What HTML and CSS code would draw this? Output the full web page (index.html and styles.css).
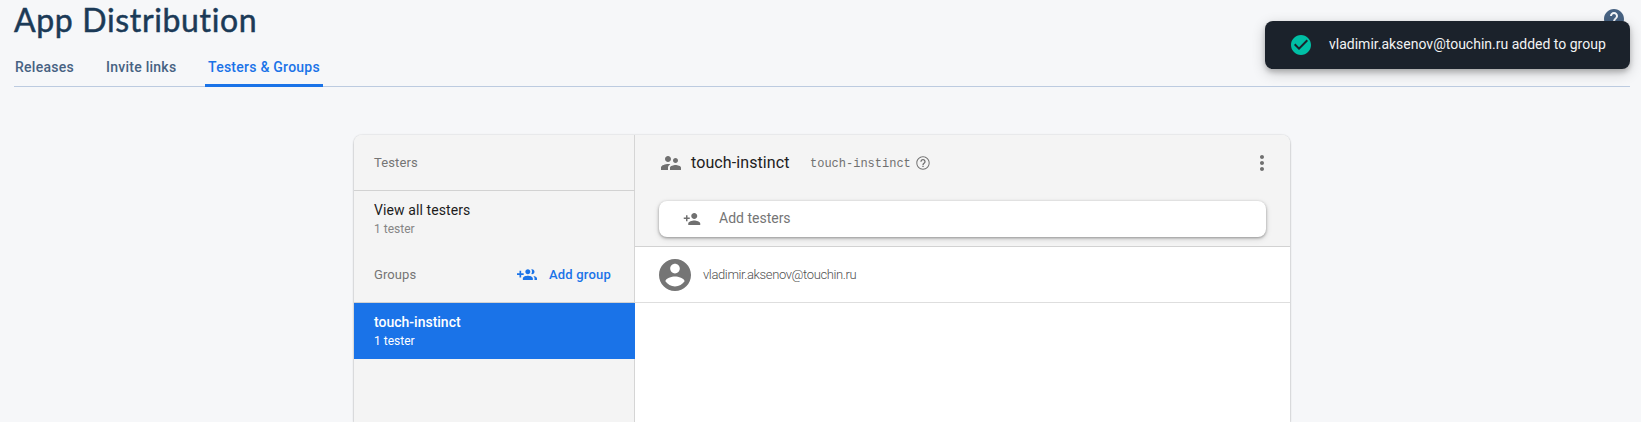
FILE: index.html
```html
<!DOCTYPE html>
<html lang="en">
<head>
<meta charset="utf-8">
<title>App Distribution</title>
<link rel="stylesheet" href="styles.css">
</head>
<body>
<header class="page-header">
  <div class="title-row">
    <h1 class="title">App Distribution</h1>
    <svg class="help" viewBox="0 0 24 24"><path d="M12 2C6.48 2 2 6.48 2 12s4.48 10 10 10 10-4.48 10-10S17.52 2 12 2zm1 17h-2v-2h2v2zm2.07-7.75l-.9.92C13.45 12.9 13 13.5 13 15h-2v-.5c0-1.1.45-2.1 1.17-2.83l1.24-1.26c.37-.36.59-.86.59-1.41 0-1.1-.9-2-2-2s-2 .9-2 2H8c0-2.21 1.79-4 4-4s4 1.79 4 4c0 .88-.36 1.68-.93 2.25z"/></svg>
  </div>
  <nav class="tabs">
    <a class="tab tab-releases">Releases</a>
    <a class="tab tab-invite">Invite links</a>
    <a class="tab tab-active">Testers &amp; Groups</a>
  </nav>
</header>

<main class="card">
  <aside class="sidebar">
    <div class="side-head"><span class="side-label">Testers</span></div>
    <div class="item">
      <div class="item-name">View all testers</div>
      <div class="item-count">1 tester</div>
    </div>
    <div class="side-groups">
      <span class="side-label">Groups</span>
      <a class="add-group">
        <svg class="icon20" viewBox="0 0 24 24"><path d="M8 10H5V7H3v3H0v2h3v3h2v-3h3v-2zm10 1c1.66 0 2.99-1.34 2.99-3S19.66 5 18 5c-.32 0-.63.05-.91.14.57.81.9 1.79.9 2.86s-.34 2.04-.9 2.86c.28.09.59.14.91.14zm-5 0c1.66 0 2.99-1.34 2.99-3S14.66 5 13 5c-1.66 0-3 1.34-3 3s1.34 3 3 3zm6.62 2.16c.83.73 1.38 1.66 1.38 2.84v2h3v-2c0-1.54-2.37-2.49-4.38-2.84zM13 13c-2 0-6 1-6 3v2h12v-2c0-2-4-3-6-3z"/></svg>
        <span>Add group</span>
      </a>
    </div>
    <div class="item item-selected">
      <div class="item-name">touch-instinct</div>
      <div class="item-count">1 tester</div>
    </div>
  </aside>
  <section class="content">
    <div class="content-head">
      <div class="group-row">
        <svg class="icon24" viewBox="0 0 24 24"><path d="M16.5 12c1.38 0 2.49-1.12 2.49-2.5S17.88 7 16.5 7C15.12 7 14 8.12 14 9.5s1.12 2.5 2.5 2.5zM9 11c1.66 0 2.99-1.34 2.99-3S10.66 5 9 5C7.34 5 6 6.34 6 8s1.34 3 3 3zm7.5 3c-1.83 0-5.5.92-5.5 2.75V19h11v-2.25c0-1.83-3.67-2.75-5.5-2.75zM9 13c-2.33 0-7 1.17-7 3.5V19h7v-2.25c0-.85.33-2.34 2.37-3.47C10.5 13.1 9.66 13 9 13z"/></svg>
        <span class="group-name">touch-instinct</span>
        <span class="group-alias">touch-instinct</span>
        <svg class="icon16" viewBox="0 0 24 24"><path d="M11 18h2v-2h-2v2zm1-16C6.48 2 2 6.48 2 12s4.48 10 10 10 10-4.48 10-10S17.52 2 12 2zm0 18.500c-4.690 0-8.500-3.810-8.500-8.500s3.810-8.500 8.500-8.500 8.500 3.810 8.500 8.500-3.810 8.500-8.500 8.500zm0-14.500c-2.210 0-4 1.790-4 4h2c0-1.100.9-2 2-2s2 .9 2 2c0 2-3 1.750-3 5h2c0-2.250 3-2.500 3-5 0-2.210-1.790-4-4-4z"/></svg>
        <svg class="icon24 more" viewBox="0 0 24 24"><path d="M12 8c1.100 0 2-.9 2-2s-.9-2-2-2-2 .9-2 2 .9 2 2 2zm0 2c-1.100 0-2 .9-2 2s.9 2 2 2 2-.9 2-2-.9-2-2-2zm0 6c-1.100 0-2 .9-2 2s.9 2 2 2 2-.9 2-2-.9-2-2-2z"/></svg>
      </div>
      <div class="add-box">
        <svg class="icon18" viewBox="0 0 24 24"><path d="M15 12c2.210 0 4-1.790 4-4s-1.790-4-4-4-4 1.790-4 4 1.790 4 4 4zm-9-2V7H4v3H1v2h3v3h2v-3h3v-2H6zm9 4c-2.670 0-8 1.340-8 4v2h16v-2c0-2.660-5.330-4-8-4z"/></svg>
        <span class="add-text">Add testers</span>
      </div>
    </div>
    <div class="tester-row">
      <svg class="avatar" viewBox="2 2 20 20"><path d="M12 2C6.480 2 2 6.480 2 12s4.480 10 10 10 10-4.480 10-10S17.520 2 12 2zm0 3c1.660 0 3 1.340 3 3s-1.340 3-3 3-3-1.340-3-3 1.340-3 3-3zm0 14.200c-2.500 0-4.710-1.280-6-3.220.030-1.990 4-3.080 6-3.080 1.990 0 5.970 1.090 6 3.080-1.290 1.940-3.500 3.220-6 3.220z"/></svg>
      <span class="email">vladimir.aksenov@touchin.ru</span>
    </div>
  </section>
</main>

<div class="toast">
  <svg class="toast-icon" viewBox="0 0 24 24"><path d="M12 2C6.480 2 2 6.480 2 12s4.480 10 10 10 10-4.480 10-10S17.520 2 12 2zm-2 15l-5-5 1.410-1.410L10 14.170l7.590-7.590L19 8l-9 9z"/></svg>
  <span class="toast-text">vladimir.aksenov@touchin.ru added to group</span>
</div>
</body>
</html>
```
FILE: styles.css
```css
* { box-sizing: border-box; }
html, body { height: 100%; }
body {
  display: flex;
  flex-direction: column;
  margin: 0;
  background: #f6f7f9;
  font-family: Roboto, sans-serif;
  color: rgba(0, 0, 0, 0.87);
}
svg { display: block; flex: none; fill: currentColor; }

.page-header { flex: none; height: 87px; padding: 0 11px 0 14px; }
.title-row { display: flex; justify-content: space-between; height: 47px; padding-right: 4px; }
.title {
  margin: 0;
  font: 400 32px/40px Lato, sans-serif;
  letter-spacing: 0.65px;
  color: #1b3a57;
  -webkit-text-stroke: 0.5px #1b3a57;
  white-space: nowrap;
}
.help { width: 24px; height: 24px; margin-top: 7px; color: #476282; }
.tabs { display: flex; height: 40px; border-bottom: 1px solid #bccbe0; }
.tab {
  height: 40px;
  line-height: 40px;
  font-size: 14px;
  font-weight: 500;
  letter-spacing: 0.25px;
  color: #476282;
  white-space: nowrap;
}
.tab-releases { width: 92px; padding-left: 1px; }
.tab-invite { width: 99px; }
.tab-active {
  width: 118px;
  padding-left: 3px;
  color: #1a73e8;
  background: linear-gradient(#1a73e8, #1a73e8) bottom / 100% 3px no-repeat;
}

.card {
  display: flex;
  flex: 1;
  width: 936px;
  margin: 48px 0 0 354px;
  background: #fff;
  border-radius: 8px 8px 0 0;
  overflow: hidden;
  box-shadow: 0 1px 2px rgba(0, 0, 0, 0.3), 0 0 2px rgba(0, 0, 0, 0.15);
}
.sidebar { width: 281px; background: linear-gradient(#d5d5d5, #d5d5d5) right / 1px 100% no-repeat #f4f4f4; }
.side-head { display: flex; align-items: center; height: 56px; padding-left: 20px; border-bottom: 1px solid #d2d2d2; }
.side-label { font-size: 13px; letter-spacing: 0.1px; color: #757575; }
.item { height: 56px; padding: 9px 20px 0; }
.item-name { font-size: 14px; line-height: 20px; letter-spacing: 0.1px; color: #1c1c1c; }
.item-count { font-size: 12px; line-height: 18px; color: #858585; }
.side-groups {
  display: flex;
  align-items: center;
  justify-content: space-between;
  height: 56px;
  padding: 0 24px 0 20px;
  border-bottom: 1px solid #d2d2d2;
}
.add-group { display: flex; align-items: center; gap: 12px; font-size: 13px; font-weight: 500; letter-spacing: 0.2px; color: #1a73e8; }
.item-selected { background: #1a73e8; }
.item-selected .item-name { font-weight: 500; letter-spacing: 0; color: #fff; }
.item-selected .item-count { color: #fff; }

.icon16 { width: 16px; height: 16px; }
.icon18 { width: 18px; height: 18px; }
.icon20 { width: 20px; height: 20px; }
.icon24 { width: 24px; height: 24px; }

.content { flex: 1; }
.content-head { height: 112px; background: #f4f4f4; border-bottom: 1px solid #d2d2d2; }
.group-row { display: flex; align-items: center; height: 56px; padding: 0 16px 0 24px; color: #707070; }
.group-name { width: 119px; margin: -2px 0 0 8px; font-size: 16px; letter-spacing: 0.1px; color: #212121; }
.group-alias { width: 105px; padding-top: 1px; font: 12px/16px "Liberation Mono", monospace; }
.more { margin-left: auto; }
.add-box {
  display: flex;
  align-items: center;
  height: 36px;
  margin: 10px 24px 0;
  padding-left: 24px;
  background: #fff;
  border-radius: 8px;
  box-shadow: 0 1px 3px rgba(0, 0, 0, 0.35), 0 2px 6px rgba(0, 0, 0, 0.12);
  color: #707070;
}
.add-text { margin: -2px 0 0 18px; font-size: 14px; color: #757575; }
.tester-row { display: flex; align-items: center; height: 56px; padding-left: 24px; border-bottom: 1px solid #dedede; }
.avatar { width: 32px; height: 32px; color: #757575; }
.email { margin-left: 12px; font-size: 13px; font-weight: 300; letter-spacing: -0.38px; color: #505050; }

.toast {
  position: absolute;
  top: 21px;
  right: 11px;
  display: flex;
  align-items: center;
  width: 365px;
  height: 48px;
  padding: 0 24px;
  background: #1b222b;
  border-radius: 8px;
  box-shadow: 0 3px 5px rgba(0, 0, 0, 0.2), 0 4px 14px rgba(0, 0, 0, 0.2);
}
.toast-icon { width: 24px; height: 24px; color: #00bfa5; }
.toast-text { margin: -3px 0 0 16px; font-size: 14px; color: #f2f3f3; white-space: nowrap; }
```
